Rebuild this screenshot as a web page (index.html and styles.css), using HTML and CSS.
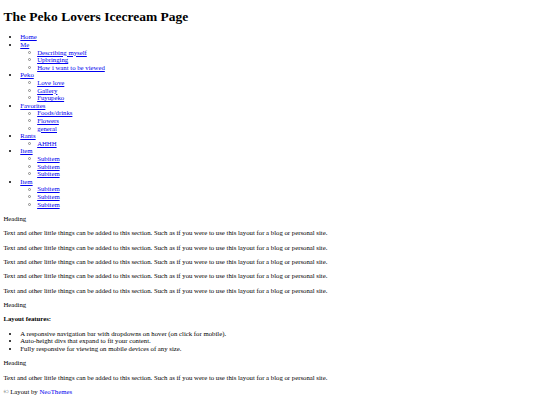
FILE: index.html
```html
<!DOCTYPE html>
<html lang="en">
<head>
<meta charset="utf-8">
<title>The Peko Lovers Icecream Page</title>
<link rel="stylesheet" href="styles.css">
</head>
<body class="page">
<h1 class="title">The Peko Lovers Icecream Page</h1>
<ul class="nav">
  <li><a class="link" href="#">Home</a></li>
  <li><a class="link" href="#">Me</a>
    <ul class="sub">
      <li><a class="link" href="#">Describing myself</a></li>
      <li><a class="link" href="#">Upbringing</a></li>
      <li><a class="link" href="#">How i want to be viewed</a></li>
    </ul>
  </li>
  <li><a class="link" href="#">Peko</a>
    <ul class="sub">
      <li><a class="link" href="#">Love love</a></li>
      <li><a class="link" href="#">Gallery</a></li>
      <li><a class="link" href="#">Fuyupeko</a></li>
    </ul>
  </li>
  <li><a class="link" href="#">Favorites</a>
    <ul class="sub">
      <li><a class="link" href="#">Foods/drinks</a></li>
      <li><a class="link" href="#">Flowers</a></li>
      <li><a class="link" href="#">general</a></li>
    </ul>
  </li>
  <li><a class="link" href="#">Rants</a>
    <ul class="sub">
      <li><a class="link" href="#">AHHH</a></li>
    </ul>
  </li>
  <li><a class="link" href="#">Item</a>
    <ul class="sub">
      <li><a class="link" href="#">Subitem</a></li>
      <li><a class="link" href="#">Subitem</a></li>
      <li><a class="link" href="#">Subitem</a></li>
    </ul>
  </li>
  <li><a class="link" href="#">Item</a>
    <ul class="sub">
      <li><a class="link" href="#">Subitem</a></li>
      <li><a class="link" href="#">Subitem</a></li>
      <li><a class="link" href="#">Subitem</a></li>
    </ul>
  </li>
</ul>
<div class="section">
  <div class="heading">Heading</div>
  <p class="text">Text and other little things can be added to this section. Such as if you were to use this layout for a blog or personal site.</p>
  <p class="text">Text and other little things can be added to this section. Such as if you were to use this layout for a blog or personal site.</p>
  <p class="text">Text and other little things can be added to this section. Such as if you were to use this layout for a blog or personal site.</p>
  <p class="text">Text and other little things can be added to this section. Such as if you were to use this layout for a blog or personal site.</p>
  <p class="text">Text and other little things can be added to this section. Such as if you were to use this layout for a blog or personal site.</p>
</div>
<div class="section">
  <div class="heading">Heading</div>
  <p class="text"><b>Layout features:</b></p>
  <ul class="features">
    <li>A responsive navigation bar with dropdowns on hover (on click for mobile).</li>
    <li>Auto-height divs that expand to fit your content.</li>
    <li>Fully responsive for viewing on mobile devices of any size.</li>
  </ul>
</div>
<div class="section">
  <div class="heading">Heading</div>
  <p class="text">Text and other little things can be added to this section. Such as if you were to use this layout for a blog or personal site.</p>
</div>
<div class="footer">© Layout by <a class="link" href="#">NeoThemes</a></div>
</body>
</html>
```
FILE: styles.css
```css
html {
  background: #ffffff;
}
.page {
  margin: 3.375px;
  font-family: "Liberation Serif", "Times New Roman", serif;
  font-size: 6.75px;
  line-height: 1.125;
  color: #000000;
}
.title {
  font-size: 2em;
  line-height: 1.15;
  font-weight: bold;
  margin: 5.6px 0 9px;
}
.nav,
.features {
  margin: 1em 0;
  padding-left: 16.875px;
  list-style: disc;
}
.sub {
  margin: 0;
  padding-left: 16.875px;
  list-style: none;
}
.sub > li::before {
  content: "";
  display: inline-block;
  box-sizing: border-box;
  width: 3px;
  height: 3px;
  margin: 0 6px 0 -9px;
  border: 1px solid #8a8a8a;
  border-radius: 50%;
  vertical-align: 0.8px;
}
.text {
  margin: 1em 0;
}
.link {
  color: #0000ee;
  text-decoration: underline;
}
```
